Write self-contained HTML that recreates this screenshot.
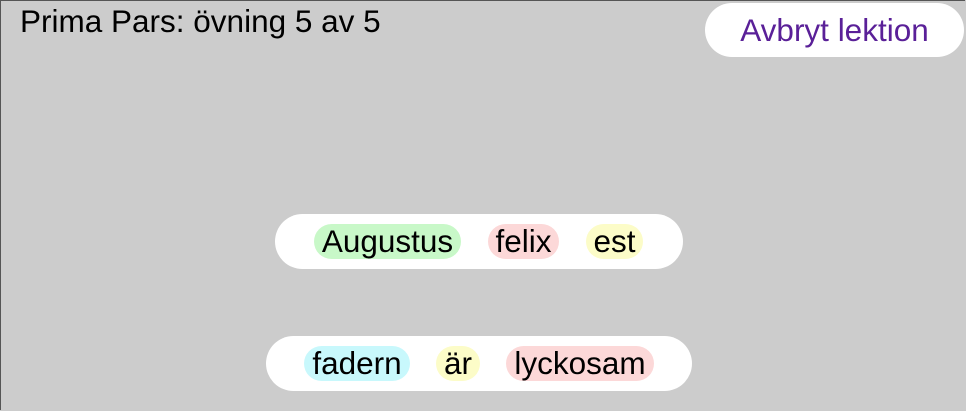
<!DOCTYPE html>
<html><head><meta charset="utf-8"><style>
html,body{margin:0;padding:0;}
body{width:966px;height:411px;background:#cccccc;position:relative;overflow:hidden;font-family:"Liberation Sans",sans-serif;}
.frame{position:absolute;left:0;top:0;width:965px;height:410px;border-left:1px solid #555;border-top:1px solid #555;box-sizing:border-box;}
.t{position:absolute;left:20px;top:3px;font-size:31.5px;line-height:36px;color:#000;}
.btn{position:absolute;left:705px;top:3px;width:259px;height:54px;border-radius:27px;background:#fff;color:#5a2098;font-size:31.5px;line-height:54px;text-align:center;}
.box{position:absolute;background:#fff;border-radius:28px;height:55px;}
.c{position:absolute;top:10px;height:35px;border-radius:18px;font-size:31.5px;line-height:35px;text-align:center;color:#000;white-space:nowrap;}
.g{background:#c8f8c8}.r{background:#fcd8d8}.y{background:#fcfcc8}.b{background:#c8f8fc}
</style></head><body>
<div class="frame"></div>
<div class="t">Prima Pars: övning 5 av 5</div>
<div class="btn">Avbryt lektion</div>
<div class="box" style="left:275px;top:214px;width:408px">
<div class="c g" style="left:39px;width:147px">Augustus</div>
<div class="c r" style="left:213px;width:71px">felix</div>
<div class="c y" style="left:311px;width:57px">est</div>
</div>
<div class="box" style="left:266px;top:336px;width:426px">
<div class="c b" style="left:38px;width:106px">fadern</div>
<div class="c y" style="left:170px;width:44px">är</div>
<div class="c r" style="left:240px;width:148px">lyckosam</div>
</div>
</body></html>
